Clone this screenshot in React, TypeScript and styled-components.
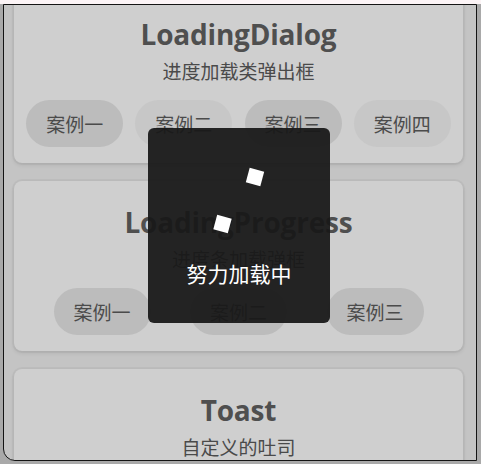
import React from 'react';
import styled, { createGlobalStyle } from 'styled-components';

const GlobalStyle = createGlobalStyle`
  html, body {
    margin: 0;
    padding: 0;
  }
  body {
    width: 481px;
    height: 464px;
    overflow: hidden;
    background: linear-gradient(#fcf4f6 0 4px, #a9a9a9 4px);
    font-family: "Noto Sans CJK SC", "Noto Sans", sans-serif;
  }
`;

const Shell = styled.div`
  width: 481px;
  height: 464px;
  padding: 4px 4px 3px 3px;
  box-sizing: border-box;
`;

const Frame = styled.div`
  position: relative;
  width: 474px;
  height: 457px;
  box-sizing: border-box;
  border: 1px solid #141414;
  border-bottom-left-radius: 12px;
  background: #c4c4c4;
  overflow: hidden;
`;

const List = styled.div`
  display: flex;
  flex-direction: column;
  gap: 18px;
  margin-top: -12px;
  padding: 0 13px 0 10px;
`;

const Card = styled.section`
  height: 170px;
  box-sizing: border-box;
  padding-top: 24px;
  display: flex;
  flex-direction: column;
  align-items: center;
  background: #cfcfcf;
  border-radius: 8px;
  box-shadow: 0 0 0 2px rgba(0, 0, 0, 0.03), 0 2px 4px rgba(0, 0, 0, 0.1);
`;

const Title = styled.h2`
  margin: 0;
  font-family: "Open Sans", Lato, sans-serif;
  font-weight: 700;
  font-size: 28px;
  line-height: 34px;
  letter-spacing: -0.2px;
  color: #4f4f4f;
`;

const Subtitle = styled.p`
  margin: 8px 0 0;
  font-size: 19px;
  line-height: 24px;
  color: #4a4a4a;
`;

const ButtonRow = styled.div`
  align-self: stretch;
  display: flex;
  justify-content: space-evenly;
  margin-top: 17px;
`;

const CaseButton = styled.button<{ $dark?: boolean }>`
  width: 97px;
  height: 47px;
  border: none;
  border-radius: 24px;
  background: ${(p) => (p.$dark ? '#bcbcbc' : '#c7c7c7')};
  color: #4b4b4b;
  font-family: "Noto Sans CJK SC", sans-serif;
  font-size: 19px;
  padding: 0;
`;

const Dialog = styled.div`
  position: absolute;
  left: 144px;
  top: 123px;
  width: 182px;
  height: 195px;
  box-sizing: border-box;
  padding-top: 37px;
  border-radius: 6px;
  background: rgba(24, 24, 24, 0.94);
  display: flex;
  flex-direction: column;
  align-items: center;
`;

const DialogText = styled.div`
  margin-top: 24px;
  font-size: 21px;
  line-height: 28px;
  color: #ffffff;
`;

const Spinner = () => (
  <svg width="70" height="70" viewBox="0 0 70 70">
    <rect x="43.5" y="4.5" width="15" height="15" fill="#fff" transform="rotate(15 51 12)" />
    <rect x="11" y="51.5" width="15" height="15" fill="#fff" transform="rotate(15 18.5 59)" />
  </svg>
);

const sections = [
  { title: 'LoadingDialog', sub: '进度加载类弹出框', cases: ['案例一', '案例二', '案例三', '案例四'], dark: [true, false, true, false] },
  { title: 'LoadingProgress', sub: '进度条加载弹框', cases: ['案例一', '案例二', '案例三'], dark: [true, true, true] },
  { title: 'Toast', sub: '自定义的吐司', cases: [], dark: [] },
];

export default function App() {
  return (
    <>
      <GlobalStyle />
      <Shell>
        <Frame>
          <List>
            {sections.map((s) => (
              <Card key={s.title}>
                <Title>{s.title}</Title>
                <Subtitle>{s.sub}</Subtitle>
                {s.cases.length > 0 && (
                  <ButtonRow>
                    {s.cases.map((c, i) => (
                      <CaseButton key={c} $dark={s.dark[i]}>{c}</CaseButton>
                    ))}
                  </ButtonRow>
                )}
              </Card>
            ))}
          </List>
          <Dialog>
            <Spinner />
            <DialogText>努力加载中</DialogText>
          </Dialog>
        </Frame>
      </Shell>
    </>
  );
}
